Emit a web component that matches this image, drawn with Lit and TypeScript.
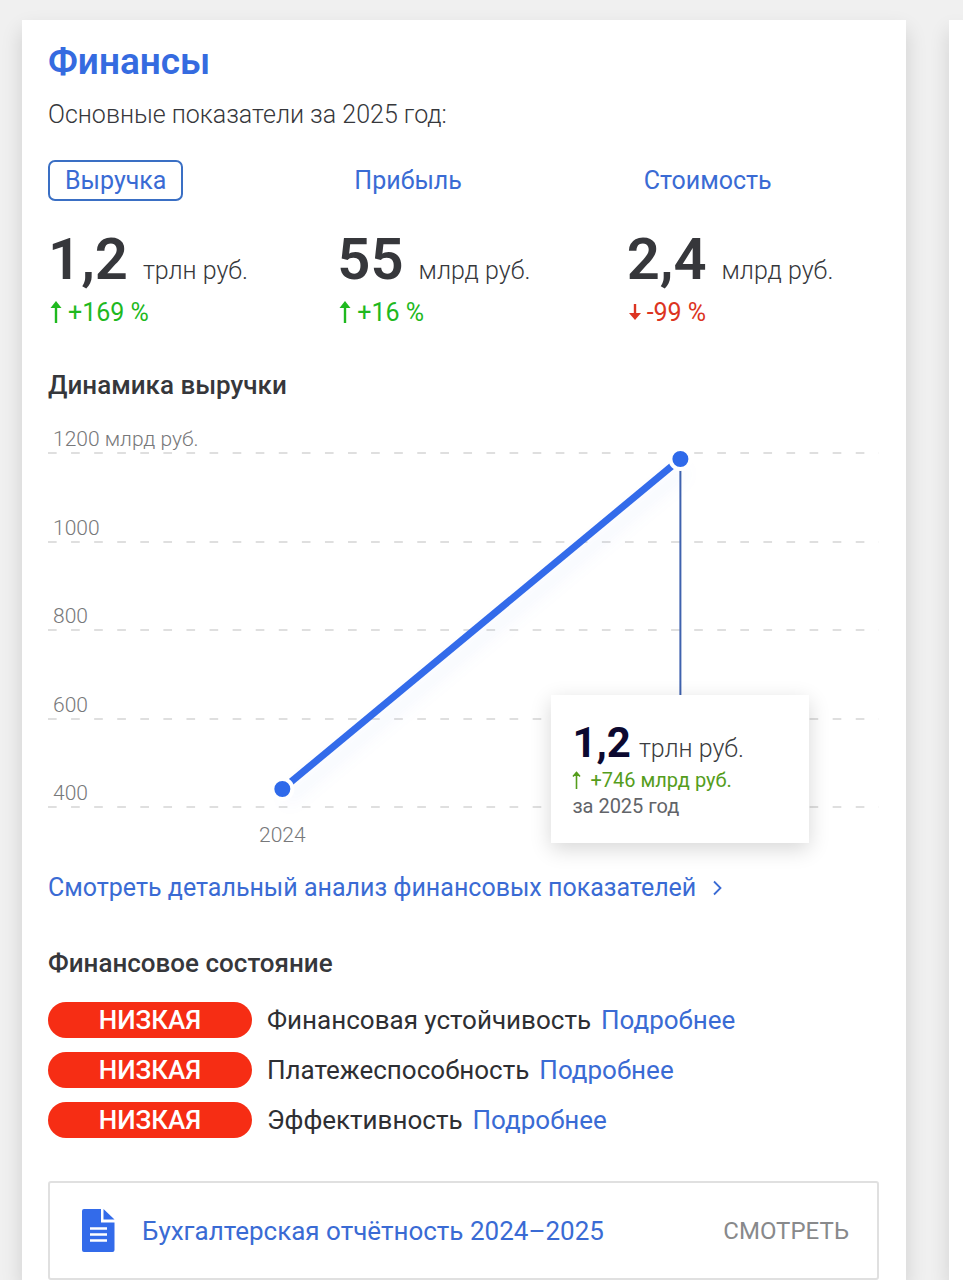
import { LitElement, html, svg, css } from "lit";
import { customElement, property, state } from "lit/decorators.js";
import { classMap } from "lit/directives/class-map.js";

interface Kpi {
  name: string;
  value: string;
  unit: string;
  delta: string;
  up: boolean;
}

const KPIS: Kpi[] = [
  { name: "Выручка", value: "1,2", unit: "трлн руб.", delta: "+169 %", up: true },
  { name: "Прибыль", value: "55", unit: "млрд руб.", delta: "+16 %", up: true },
  { name: "Стоимость", value: "2,4", unit: "млрд руб.", delta: "-99 %", up: false },
];

const LEVELS = ["1200 млрд руб.", "1000", "800", "600", "400"];

const RATINGS = ["Финансовая устойчивость", "Платежеспособность", "Эффективность"];

@customElement("revenue-chart")
export class RevenueChart extends LitElement {
  static styles = css`
    :host {
      display: block;
      position: relative;
    }
    .grid {
      display: grid;
      grid-template-rows: 29px repeat(4, 1fr);
      height: 383px;
      color: #77787a;
      font-size: 21px;
      line-height: 28px;
      font-weight: 300;
    }
    .level {
      display: flex;
      align-items: flex-end;
      padding: 0 0 1px 5px;
      background: linear-gradient(90deg, #dfdfdf 9px, transparent 0) left bottom / 23px 2px round no-repeat;
    }
    .axis {
      width: 56.4%;
      margin-top: 13px;
      text-align: center;
      color: #77787a;
      font-size: 21px;
      line-height: 28px;
      font-weight: 300;
    }
    .plot {
      position: absolute;
      left: 0;
      top: 0;
      width: 100%;
      height: 100%;
      overflow: visible;
    }
    .trend {
      filter: drop-shadow(4px 12px 8px rgba(47, 107, 235, 0.08));
    }
    .tip {
      position: absolute;
      left: 76.1%;
      top: 270px;
      transform: translateX(-50%);
      box-sizing: border-box;
      width: 258px;
      padding: 24px 21px;
      background: #fff;
      box-shadow: 0 6px 20px rgba(0, 0, 0, 0.16);
      white-space: nowrap;
    }
    .sum {
      display: flex;
      align-items: baseline;
      gap: 8px;
      line-height: 24px;
      font-size: 25px;
      font-weight: 300;
      color: #3b3c40;
    }
    .sum b {
      font-size: 42px;
      line-height: 48px;
      font-weight: 700;
      color: #0c0930;
    }
    .growth {
      display: flex;
      align-items: center;
      gap: 9px;
      color: #559d1c;
      font-size: 20px;
      line-height: 26px;
    }
    .period {
      color: #626469;
      font-size: 20px;
      line-height: 26px;
    }
  `;

  render() {
    return html`
      <div class="grid">${LEVELS.map((l) => html`<div class="level">${l}</div>`)}</div>
      <div class="axis">2024</div>
      <svg class="plot" aria-hidden="true">
        <line x1="76.1%" y1="34" x2="76.1%" y2="270" stroke="#3f62ae" stroke-width="2" />
        <line class="trend" x1="28.2%" y1="364" x2="76.1%" y2="34" stroke="#336bea" stroke-width="7" />
        ${[["28.2%", 364], ["76.1%", 34]].map(
          ([x, y]) => svg`<circle cx=${x} cy=${y} r="10" fill="#2f6aea" stroke="#fff" stroke-width="4" />`
        )}
      </svg>
      <div class="tip">
        <div class="sum"><b>1,2</b><span>трлн руб.</span></div>
        <div class="growth">
          <svg width="9" height="18" viewBox="0 0 9 18" aria-hidden="true">
            <path d="M4.5 18V2M1 5.5L4.5 1.5L8 5.5" fill="none" stroke="currentColor" stroke-width="1.6" />
            <path d="M4.5 1L8 5H1z" fill="currentColor" />
          </svg>
          +746 млрд руб.
        </div>
        <div class="period">за 2025 год</div>
      </div>
    `;
  }
}

@customElement("rating-row")
export class RatingRow extends LitElement {
  @property() name = "";

  static styles = css`
    :host {
      display: flex;
      align-items: center;
      font-size: 26px;
      line-height: 36px;
      color: #2e2f33;
    }
    .pill {
      width: 204px;
      margin-right: 15px;
      border-radius: 18px;
      background: #f62d14;
      color: #fff;
      font-weight: 500;
      text-align: center;
    }
    .more {
      margin-left: 10px;
      color: #3a6bd4;
      text-decoration: none;
    }
  `;

  render() {
    return html`
      <span class="pill">НИЗКАЯ</span>
      <span>${this.name}</span>
      <a class="more" href="#more">Подробнее</a>
    `;
  }
}

@customElement("app-root")
export class AppRoot extends LitElement {
  @state() private selected = 0;

  static styles = css`
    :host {
      display: flex;
      gap: 43px;
      box-sizing: border-box;
      min-height: 100vh;
      padding: 20px 0 0 22px;
      overflow: hidden;
      background: #f0f0f0;
      color: #36373b;
      font-family: Roboto, "Liberation Sans", sans-serif;
      font-size: 25px;
      line-height: 32px;
    }
    .card,
    .next {
      background: #fff;
      box-shadow: 0 10px 20px rgba(0, 0, 0, 0.14);
    }
    .card {
      flex: 1;
      min-width: 0;
      padding: 20px 27px 0 26px;
    }
    .next {
      flex: 0 0 14px;
    }
    h1,
    h2,
    p {
      margin: 0;
    }
    h1 {
      color: #356be0;
      font-size: 37px;
      line-height: 44px;
      font-weight: 600;
    }
    .lead {
      margin-top: 15px;
      font-weight: 300;
    }
    h2 {
      font-size: 26px;
      line-height: 32px;
      font-weight: 500;
    }
    .kpis {
      display: grid;
      grid-template-columns: repeat(3, 1fr);
      gap: 37px;
      margin-top: 29px;
    }
    .tab {
      height: 41px;
      padding: 0 15px;
      border: 2px solid transparent;
      border-radius: 7px;
      background: none;
      color: #3a6bd4;
      font: inherit;
      cursor: pointer;
    }
    .tab.on {
      border-color: #3a6fc4;
    }
    .value {
      display: flex;
      align-items: baseline;
      gap: 15px;
      margin-top: 26px;
      line-height: 32px;
      font-weight: 300;
      white-space: nowrap;
    }
    .value b {
      font-size: 58px;
      line-height: 64px;
      font-weight: 600;
    }
    .delta {
      display: flex;
      align-items: center;
      gap: 5px;
      margin-top: 6px;
      padding-left: 1px;
      color: #1fb91f;
    }
    .delta.down {
      color: #dc3422;
    }
    .dynamics {
      margin-top: 40px;
    }
    revenue-chart {
      margin-top: 24px;
    }
    .analysis {
      display: inline-flex;
      align-items: center;
      gap: 17px;
      margin-top: 23px;
      color: #3a6bd4;
      text-decoration: none;
    }
    .health {
      margin-top: 43px;
    }
    .ratings {
      display: grid;
      gap: 14px;
      margin-top: 23px;
    }
    .report {
      display: flex;
      align-items: center;
      box-sizing: border-box;
      height: 99px;
      margin-top: 43px;
      padding: 0 28px 0 32px;
      border: 2px solid #e0e0e0;
      border-radius: 3px;
      color: #3a6bd4;
      font-size: 26px;
      text-decoration: none;
    }
    .report svg {
      margin-right: 27px;
    }
    .open {
      margin-left: auto;
      color: #88898b;
      font-size: 24px;
    }
  `;

  private arrow(up: boolean) {
    return up
      ? html`<svg width="14" height="24" viewBox="0 0 14 24" aria-hidden="true">
          <path d="M7 22V3" stroke="currentColor" stroke-width="2.4" />
          <path d="M7 0L12.5 7H1.5z" fill="currentColor" />
        </svg>`
      : html`<svg width="14" height="20" viewBox="0 0 14 20" aria-hidden="true">
          <path d="M7 1V13" stroke="currentColor" stroke-width="2.4" />
          <path d="M7 17L13 10H1z" fill="currentColor" />
        </svg>`;
  }

  render() {
    return html`
      <main class="card">
        <h1>Финансы</h1>
        <p class="lead">Основные показатели за 2025 год:</p>
        <div class="kpis">
          ${KPIS.map(
            (k, i) => html`
              <section>
                <button
                  class=${classMap({ tab: true, on: i === this.selected })}
                  aria-pressed=${i === this.selected}
                  @click=${() => (this.selected = i)}
                >
                  ${k.name}
                </button>
                <div class="value"><b>${k.value}</b><span>${k.unit}</span></div>
                <div class=${classMap({ delta: true, down: !k.up })}>${this.arrow(k.up)}${k.delta}</div>
              </section>
            `
          )}
        </div>
        <h2 class="dynamics">Динамика выручки</h2>
        <revenue-chart></revenue-chart>
        <a class="analysis" href="#analysis">
          Смотреть детальный анализ финансовых показателей
          <svg width="9" height="16" viewBox="0 0 9 16" aria-hidden="true">
            <path d="M1 1.5L7.5 8L1 14.5" fill="none" stroke="currentColor" stroke-width="1.8" />
          </svg>
        </a>
        <h2 class="health">Финансовое состояние</h2>
        <div class="ratings">${RATINGS.map((r) => html`<rating-row name=${r}></rating-row>`)}</div>
        <a class="report" href="#report">
          <svg width="33" height="43" viewBox="0 0 33 43" aria-hidden="true">
            <path d="M2 0H19V13.5H32.5V41a2 2 0 0 1-2 2H2a2 2 0 0 1-2-2V2a2 2 0 0 1 2-2z" fill="#336bea" />
            <path d="M21.5 0L32.5 10.5H21.500z" fill="#336bea" />
            <path d="M8 19.5H25M8 25.5H25M8 31.5H25" stroke="#fff" stroke-width="2.4" />
          </svg>
          Бухгалтерская отчётность 2024–2025
          <span class="open">СМОТРЕТЬ</span>
        </a>
      </main>
      <aside class="next"></aside>
    `;
  }
}
